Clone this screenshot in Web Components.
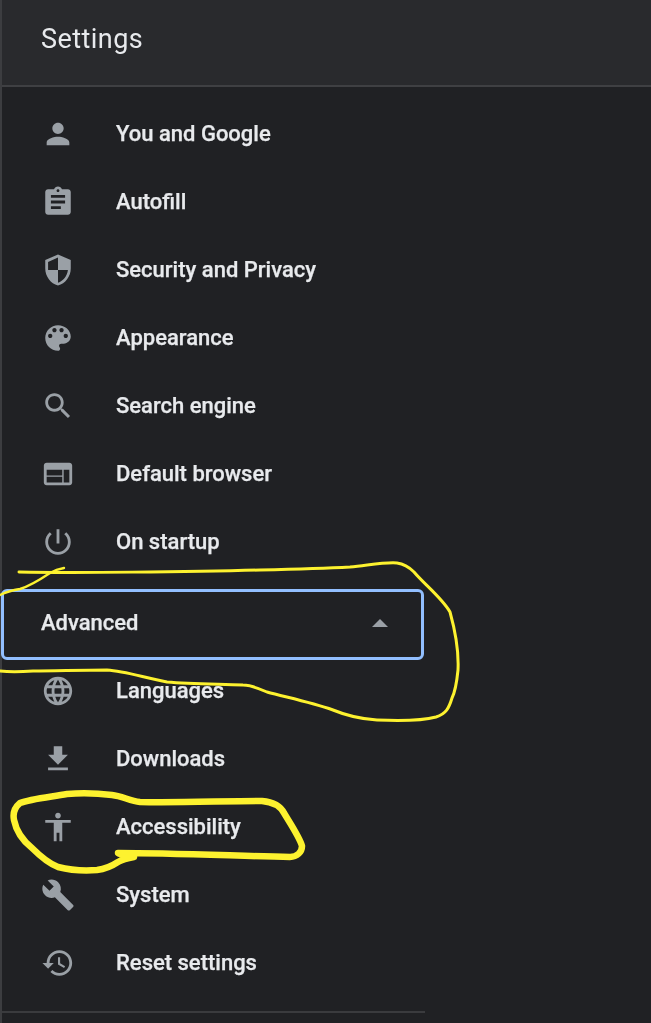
<!DOCTYPE html>
<html lang="en">
<head>
<meta charset="utf-8">
<title>Settings</title>
<style>
    html, body { margin: 0; height: 100%; background: #202124; overflow: hidden; }
</style>
</head>
<body>
<settings-app>
    <settings-header slot="header">Settings</settings-header>
    <menu-item icon="person">You and Google</menu-item>
    <menu-item icon="assignment">Autofill</menu-item>
    <menu-item icon="security">Security and Privacy</menu-item>
    <menu-item icon="palette">Appearance</menu-item>
    <menu-item icon="search">Search engine</menu-item>
    <menu-item icon="web">Default browser</menu-item>
    <menu-item icon="power">On startup</menu-item>
    <advanced-toggle>Advanced</advanced-toggle>
    <menu-item icon="language">Languages</menu-item>
    <menu-item icon="download">Downloads</menu-item>
    <menu-item icon="accessibility">Accessibility</menu-item>
    <menu-item icon="build">System</menu-item>
    <menu-item icon="history">Reset settings</menu-item>
    <scribble-layer slot="overlay"></scribble-layer>
</settings-app>

<script>
const icons = {
    person: 'M12 12c2.21 0 4-1.79 4-4s-1.79-4-4-4-4 1.79-4 4 1.79 4 4 4zm0 2c-2.67 0-8 1.34-8 4v2h16v-2c0-2.66-5.33-4-8-4z',
    assignment: 'M19 3h-4.18C14.4 1.84 13.3 1 12 1c-1.3 0-2.4.84-2.82 2H5c-1.1 0-2 .9-2 2v14c0 1.1.9 2 2 2h14c1.1 0 2-.9 2-2V5c0-1.1-.9-2-2-2zm-7 0c.55 0 1 .45 1 1s-.45 1-1 1-1-.45-1-1 .45-1 1-1zm2 14H7v-2h7v2zm3-4H7v-2h10v2zm0-4H7V7h10v2z',
    security: 'M12 1L3 5v6c0 5.55 3.84 10.74 9 12 5.16-1.26 9-6.45 9-12V5l-9-4zm0 10.99h7c-.53 4.12-3.28 7.79-7 8.94V12H5V6.3l7-3.11v8.8z',
    palette: 'M12 3c-4.97 0-9 4.03-9 9s4.03 9 9 9c.83 0 1.5-.67 1.5-1.5 0-.39-.15-.74-.39-1.01-.23-.26-.38-.61-.38-.99 0-.83.67-1.5 1.5-1.5H16c2.76 0 5-2.24 5-5 0-4.42-4.03-8-9-8zm-5.5 9c-.83 0-1.5-.67-1.5-1.5S5.67 9 6.5 9 8 9.67 8 10.5 7.33 12 6.5 12zm3-4C8.67 8 8 7.33 8 6.5S8.67 5 9.5 5s1.5.67 1.5 1.5S10.33 8 9.5 8zm5 0c-.83 0-1.5-.67-1.5-1.5S13.67 5 14.5 5s1.5.67 1.5 1.5S15.33 8 14.5 8zm3 4c-.83 0-1.5-.67-1.5-1.5S16.67 9 17.5 9s1.5.67 1.5 1.5-.67 1.5-1.5 1.5z',
    search: 'M15.5 14h-.79l-.28-.27C15.41 12.59 16 11.11 16 9.5 16 5.91 13.09 3 9.5 3S3 5.91 3 9.5 5.91 16 9.5 16c1.61 0 3.09-.59 4.23-1.57l.27.28v.79l5 4.99L20.49 19l-4.99-5zm-6 0C7.01 14 5 11.99 5 9.5S7.01 5 9.5 5 14 7.01 14 9.5 11.99 14 9.5 14z',
    web: 'M20 4H4c-1.1 0-1.99.9-1.99 2L2 18c0 1.1.9 2 2 2h16c1.1 0 2-.9 2-2V6c0-1.1-.9-2-2-2zm-5 14H4v-4h11v4zm0-5H4V9h11v4zm5 5h-4V9h4v9z',
    power: 'M13 3h-2v10h2V3zm4.83 2.17l-1.42 1.42C17.99 7.86 19 9.81 19 12c0 3.87-3.13 7-7 7s-7-3.13-7-7c0-2.19 1.01-4.14 2.58-5.42L6.17 5.17C4.23 6.82 3 9.26 3 12c0 4.97 4.03 9 9 9s9-4.03 9-9c0-2.74-1.23-5.18-3.17-6.83z',
    language: 'M11.99 2C6.47 2 2 6.48 2 12s4.47 10 9.99 10C17.52 22 22 17.52 22 12S17.52 2 11.99 2zm6.93 6h-2.95c-.32-1.25-.78-2.45-1.38-3.56 1.84.63 3.37 1.91 4.33 3.56zM12 4.04c.83 1.2 1.48 2.53 1.91 3.96h-3.82c.43-1.43 1.08-2.76 1.91-3.96zM4.26 14C4.1 13.36 4 12.69 4 12s.1-1.36.26-2h3.38c-.08.66-.14 1.32-.14 2 0 .68.06 1.34.14 2H4.26zm.82 2h2.95c.32 1.25.78 2.45 1.38 3.56-1.84-.63-3.37-1.9-4.33-3.56zm2.95-8H5.08c.96-1.66 2.49-2.93 4.33-3.56C8.81 5.55 8.35 6.75 8.03 8zM12 19.96c-.83-1.2-1.48-2.53-1.91-3.96h3.82c-.43 1.43-1.08 2.76-1.91 3.96zM14.34 14H9.66c-.09-.66-.16-1.32-.16-2 0-.68.07-1.35.16-2h4.68c.09.65.16 1.32.16 2 0 .68-.07 1.34-.16 2zm.25 5.56c.6-1.11 1.06-2.31 1.38-3.56h2.95c-.96 1.65-2.49 2.93-4.33 3.56zM16.36 14c.08-.66.14-1.32.14-2 0-.68-.06-1.34-.14-2h3.38c.16.64.26 1.31.26 2s-.1 1.36-.26 2h-3.38z',
    download: 'M19 9h-4V3H9v6H5l7 7 7-7zM5 18v2h14v-2H5z',
    accessibility: 'M12 2c1.1 0 2 .9 2 2s-.9 2-2 2-2-.9-2-2 .9-2 2-2zm9 7h-6v13h-2v-6h-2v6H9V9H3V7h18v2z',
    build: 'M22.7 19l-9.1-9.1c.9-2.3.4-5-1.5-6.9-2-2-5-2.4-7.4-1.3L9 6 6 9 1.6 4.7C.4 7.1.9 10.1 2.9 12.1c1.9 1.9 4.6 2.4 6.9 1.5l9.1 9.1c.4.4 1 .4 1.4 0l2.3-2.3c.5-.4.5-1.1.1-1.4z',
    history: 'M13 3c-4.97 0-9 4.03-9 9H1l3.89 3.89.07.14L9 12H6c0-3.87 3.13-7 7-7s7 3.13 7 7-3.13 7-7 7c-1.93 0-3.68-.79-4.94-2.06l-1.42 1.42C8.27 19.99 10.51 21 13 21c4.97 0 9-4.03 9-9s-4.03-9-9-9zm-1 5v5l4.28 2.54.72-1.21-3.5-2.08V8H12z'
};

customElements.define('settings-app', class extends HTMLElement {
    constructor() {
        super();
        const shadowRoot = this.attachShadow({mode: 'open'});
        shadowRoot.innerHTML = `
            <style>
                :host {
                    display: block;
                    position: relative;
                    width: 651px;
                    height: 1023px;
                    box-sizing: border-box;
                    background: #202124;
                    border-left: 2px solid #3c3d40;
                    font-family: Roboto, "Liberation Sans", sans-serif;
                    color: #e8eaed;
                    filter: blur(.4px);
                }
                nav {
                    display: flex;
                    flex-direction: column;
                    padding-top: 13px;
                }
                .rule {
                    width: 423px;
                    height: 2px;
                    margin-top: 14px;
                    background: #3a3b3e;
                }
            </style>
            <slot name="header"></slot>
            <nav><slot></slot></nav>
            <div class="rule"></div>
            <slot name="overlay"></slot>`;
    }
});

customElements.define('settings-header', class extends HTMLElement {
    constructor() {
        super();
        const shadowRoot = this.attachShadow({mode: 'open'});
        shadowRoot.innerHTML = `
            <style>
                :host {
                    display: flex;
                    align-items: center;
                    height: 77px;
                    padding: 0 0 8px 39px;
                    background: #292a2d;
                    border-bottom: 2px solid #3f4043;
                    font-size: 27px;
                    font-weight: 400;
                    letter-spacing: .45px;
                }
            </style>
            <slot></slot>`;
    }
});

customElements.define('menu-item', class extends HTMLElement {
    constructor() {
        super();
        const shadowRoot = this.attachShadow({mode: 'open'});
        shadowRoot.innerHTML = `
            <style>
                :host {
                    display: flex;
                    align-items: center;
                    gap: 41px;
                    height: 68px;
                    padding-left: 39px;
                    font-size: 22px;
                    font-weight: 500;
                    -webkit-text-stroke: .25px #e8eaed;
                }
                svg {
                    flex: none;
                    width: 34px;
                    height: 34px;
                    fill: #9aa0a6;
                }
                span { margin-bottom: 2px; }
            </style>
            <svg viewBox="0 0 24 24"><path d="${icons[this.getAttribute('icon')]}"></path></svg>
            <span><slot></slot></span>`;
    }
});

customElements.define('advanced-toggle', class extends HTMLElement {
    constructor() {
        super();
        const shadowRoot = this.attachShadow({mode: 'open'});
        shadowRoot.innerHTML = `
            <style>
                :host {
                    display: flex;
                    align-items: center;
                    justify-content: space-between;
                    position: relative;
                    left: -1px;
                    box-sizing: border-box;
                    width: 423px;
                    height: 71px;
                    margin: 13px 0 -3px;
                    padding: 0 33px 4px 37px;
                    border: 3px solid #92bfff;
                    border-radius: 6px;
                    font-size: 22px;
                    font-weight: 500;
                    -webkit-text-stroke: .25px #e8eaed;
                }
                i {
                    width: 0;
                    height: 0;
                    border-left: 8px solid transparent;
                    border-right: 8px solid transparent;
                    border-bottom: 8px solid #9aa0a6;
                }
            </style>
            <span><slot></slot></span>
            <i></i>`;
    }
});

customElements.define('scribble-layer', class extends HTMLElement {
    constructor() {
        super();
        const shadowRoot = this.attachShadow({mode: 'open'});
        shadowRoot.innerHTML = `
            <style>
                :host {
                    position: absolute;
                    left: -2px;
                    top: 0;
                    width: 651px;
                    height: 1023px;
                    pointer-events: none;
                }
                path { fill: none; stroke: #fdf22f; stroke-linecap: round; stroke-linejoin: round; }
            </style>
            <svg width="651" height="1023" viewBox="0 0 651 1023">
                <path stroke-width="3" d="M19 572C70 573 190 572 260 570C300 569 330 568 350 567C370 565 385 562 397 563C405 564 410 568 414 572C425 585 442 598 450 612C455 630 459 650 458 670C457 680 456 690 452 698C449 708 446 714 436 717C425 720 400 721 377 720C360 719 345 715 333 710C310 702 285 697 267 692C258 688 250 685 243 685C215 684 190 684 167 682C145 678 125 671 107 670C80 670 55 671 33 671C20 672 8 672 0 671"></path>
                <path stroke-width="2.4" d="M0 595C8 591 14 590 20 589C30 586 38 581 50 573C55 570 58 569 64 568"></path>
                <path stroke-width="6.5" d="M134 857C125 855 118 854 118 853C170 853 240 856 290 857C297 857 302 852 302 846C300 838 290 823 284 813C280 805 272 802 262 801C225 801 175 803 140 802C130 801 122 796 112 795C95 793 80 793 67 794C50 797 30 799 20 803C14 808 13 815 14 820C16 830 22 840 32 848C40 856 50 864 58 867C70 870 85 871 97 870C105 869 112 866 118 862C123 859 128 858 134 857Z"></path>
            </svg>`;
    }
});
</script>
</body>
</html>
